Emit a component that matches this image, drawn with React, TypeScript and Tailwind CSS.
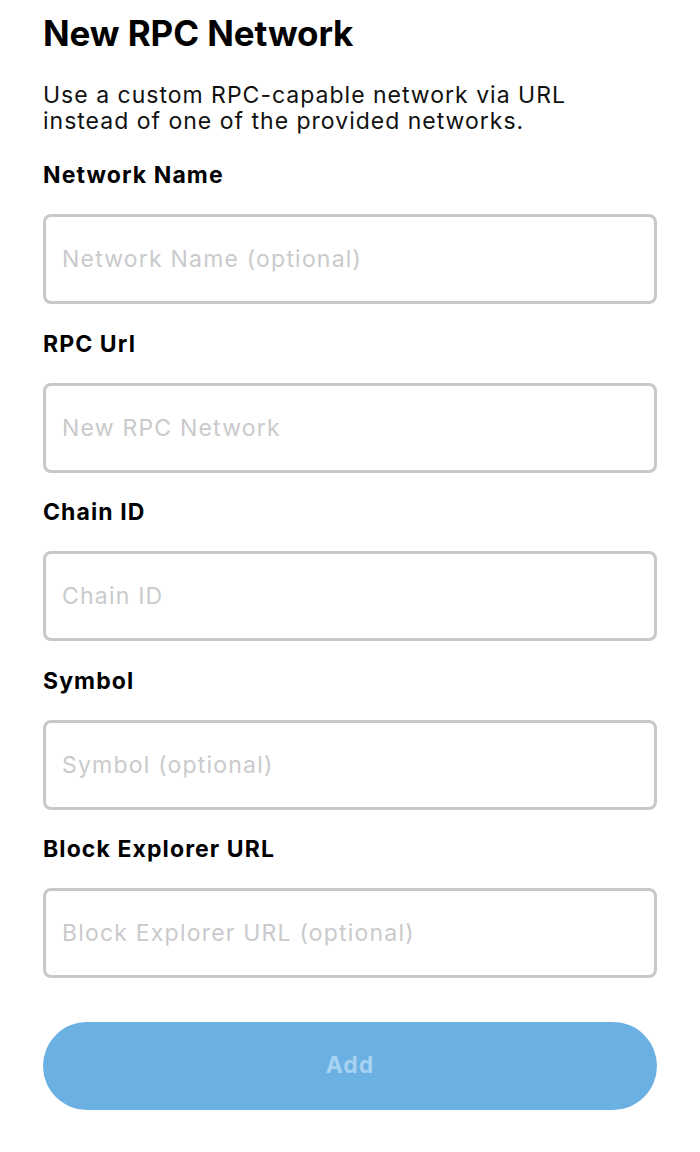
const fields = [
  { label: "Network Name", placeholder: "Network Name (optional)" },
  { label: "RPC Url", placeholder: "New RPC Network" },
  { label: "Chain ID", placeholder: "Chain ID" },
  { label: "Symbol", placeholder: "Symbol (optional)" },
  { label: "Block Explorer URL", placeholder: "Block Explorer URL (optional)" },
];

export default function App() {
  return (
    <div className="min-h-screen bg-white px-[43px] pt-[13px] font-['Inter',sans-serif] text-black">
      <h1 className="text-[35px] font-bold leading-[40px] tracking-[-0.1px]">
        New RPC Network
      </h1>
      <p className="mt-[29px] text-[23px] leading-[26px] tracking-[1px] text-[#111]">
        Use a custom RPC-capable network via URL
        <br />
        instead of one of the provided networks.
      </p>

      <div className="mt-[27px] flex flex-col">
        {fields.map((f) => (
          <div key={f.label} className="flex flex-col">
            <label className="text-[23px] font-bold leading-[28px] tracking-[1.1px]">
              {f.label}
            </label>
            <input
              type="text"
              placeholder={f.placeholder}
              className="mt-[25px] mb-[25.5px] h-[90px] w-full rounded-[8px] border-[3px] border-[#c6c8ca] bg-white px-[16px] text-[23px] tracking-[1.2px] text-black placeholder:text-[#c9cacc] outline-none"
            />
          </div>
        ))}
      </div>

      <button
        type="button"
        disabled
        className="mt-[18px] h-[88px] w-full rounded-full bg-[#6ab0e3] text-[23px] font-bold tracking-[1px] text-[#a7d2f2]"
      >
        Add
      </button>
    </div>
  );
}
